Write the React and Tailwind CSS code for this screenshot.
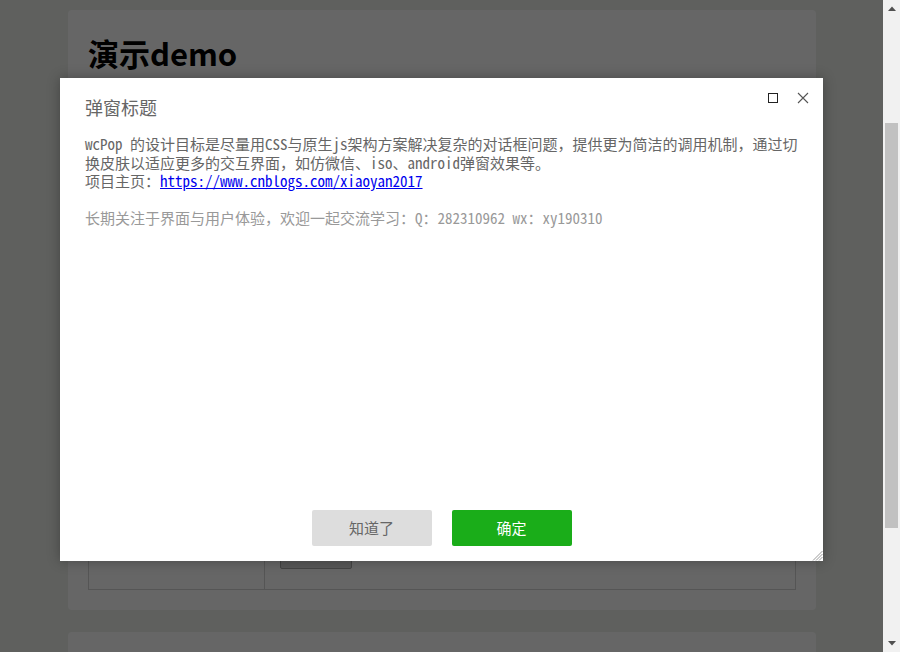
export default function App() {
  return (
    <div className="flex h-[652px] w-[900px] overflow-hidden font-['Noto_Sans_CJK_SC',sans-serif]">
      <div className="relative flex-1 overflow-hidden bg-[#eef1ec]">
        <div className="ml-[68px] flex w-[748px] flex-col gap-[22px] pt-[10px]">
          <div className="flex h-[600px] flex-col justify-between rounded-[4px] bg-white px-[20px] pb-[20px] pt-[23px]">
            <h1 className="text-[31px] font-bold leading-[40px] text-black">演示demo</h1>
            <div className="flex h-[180px] border border-[#d5d5d5]">
              <div className="w-[176px] border-r border-[#d5d5d5]"></div>
              <div className="flex flex-1 items-end px-[15px] pb-[20px]">
                <div className="h-[36px] w-[72px] rounded-[2px] border border-[#aaaaaa] bg-[#dadada]"></div>
              </div>
            </div>
          </div>
          <div className="h-[100px] rounded-[4px] bg-white"></div>
        </div>

        <div className="absolute inset-0 bg-black/60"></div>

        <div className="absolute left-[60px] top-[78px] flex h-[483px] w-[763px] flex-col bg-white shadow-[0_0_12px_rgba(0,0,0,0.3)] font-['Noto_Sans_Mono_CJK_SC','Noto_Sans_CJK_SC',monospace]">
          <div className="px-[25px] pt-[17px] text-[18px] leading-[24px] text-[#666666]">弹窗标题</div>
          <div className="absolute right-[45px] top-[15px] h-[10px] w-[10px] border-[1.5px] border-[#222222]"></div>
          <svg className="absolute right-[14px] top-[14px]" width="12" height="12" viewBox="0 0 12 12">
            <path d="M1 1 L11 11 M11 1 L1 11" stroke="#555555" strokeWidth="1.1" fill="none" />
          </svg>

          <div className="flex-1 px-[25px] pt-[16px] text-[15px] leading-[18.5px]">
            <p className="text-[#666666]">
              wcPop 的设计目标是尽量用CSS与原生js架构方案解决复杂的对话框问题，提供更为简洁的调用机制，通过切换皮肤以适应更多的交互界面，如仿微信、iso、android弹窗效果等。
              <br />
              项目主页：<a className="text-[#0000ee] underline" href="#">https://www.cnblogs.com/xiaoyan2017</a>
            </p>
            <p className="mt-[18.5px] text-[#999999]">长期关注于界面与用户体验，欢迎一起交流学习：Q：282310962 wx：xy190310</p>
          </div>

          <div className="flex justify-center gap-[20px] pb-[15px]">
            <button className="h-[36px] w-[120px] rounded-[2px] bg-[#dddddd] text-[15px] text-[#666666]">知道了</button>
            <button className="h-[36px] w-[120px] rounded-[2px] bg-[#1aad19] text-[15px] text-white">确定</button>
          </div>

          <svg className="absolute bottom-0 right-0" width="12" height="12" viewBox="0 0 12 12">
            <path d="M11.5 2 L2 11.5 M11.5 5 L5 11.5 M11.5 8 L8 11.5" stroke="#999999" strokeWidth="1" fill="none" />
          </svg>
        </div>
      </div>

      <div className="flex w-[17px] flex-col bg-[#f1f1f1]">
        <div className="flex h-[17px] items-center justify-center">
          <svg width="8" height="5" viewBox="0 0 8 5"><path d="M0 5 L4 0.5 L8 5 Z" fill="#505050" /></svg>
        </div>
        <div className="flex-1 px-[2px] pt-[106px] pb-[107px]">
          <div className="h-full bg-[#c1c1c1]"></div>
        </div>
        <div className="flex h-[17px] items-center justify-center">
          <svg width="8" height="5" viewBox="0 0 8 5"><path d="M0 0 L4 4.5 L8 0 Z" fill="#505050" /></svg>
        </div>
      </div>
    </div>
  );
}
